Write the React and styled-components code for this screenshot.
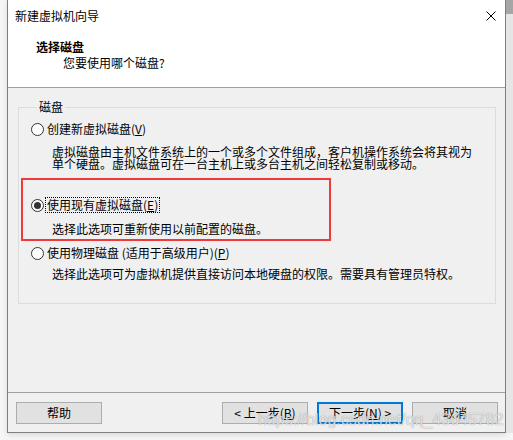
import React from 'react';
import styled, { createGlobalStyle } from 'styled-components';

const GlobalStyle = createGlobalStyle`
  html, body {
    margin: 0;
    padding: 0;
    background: #f6f6f6;
  }
  body {
    font-family: "Noto Sans CJK SC", "Microsoft YaHei", sans-serif;
    font-size: 12px;
    color: #000;
  }
`;

const Page = styled.div`
  position: relative;
  width: 513px;
  height: 440px;
  display: flex;
  align-items: flex-start;
  padding-left: 7px;
  box-sizing: border-box;
  overflow: hidden;
`;

const Window = styled.div`
  width: 499px;
  height: 433px;
  box-sizing: border-box;
  border: 1px solid #7f7f7f;
  border-top: none;
  background: #f0f0f0;
  display: flex;
  flex-direction: column;
  box-shadow: 0 2px 6px rgba(0, 0, 0, 0.12);
`;

const Backdrop = styled.div`
  flex: 1;
  height: 433px;
  display: flex;
  flex-direction: column;
  background: #e6e6e6;
`;

const BackdropTop = styled.div`
  height: 14px;
  background: #a6a6a6;
`;

const Header = styled.div`
  height: 88px;
  box-sizing: border-box;
  background: #fff;
  border-bottom: 1px solid #a0a0a0;
`;

const TitleBar = styled.div`
  height: 32px;
  display: flex;
  align-items: center;
  justify-content: space-between;
  padding: 0 9px 0 7px;
`;

const TitleText = styled.span`
  line-height: 16px;
`;

const Heading = styled.div`
  margin-top: 7px;
  padding-left: 28px;
  line-height: 16px;
  font-weight: 700;
`;

const SubHeading = styled.div`
  padding-left: 55px;
  line-height: 16px;
`;

const Body = styled.div`
  flex: 1;
  padding: 12px 9px 0 10px;
`;

const Group = styled.fieldset`
  margin: 0;
  padding: 0 0 23px 12px;
  border: 1px solid #dcdcdc;
  min-width: 0;
`;

const Legend = styled.legend`
  margin-left: 6px;
  padding: 0 2px;
  line-height: 14px;
`;

const Option = styled.div`
  margin-top: ${({ $gap }) => $gap}px;
`;

const RadioRow = styled.div`
  display: flex;
  align-items: center;
  height: 16px;
`;

const Radio = styled.span`
  width: 13px;
  height: 13px;
  box-sizing: border-box;
  border: 1px solid #333;
  border-radius: 50%;
  background: #fff;
  display: flex;
  align-items: center;
  justify-content: center;
  margin-right: 2px;
  flex-shrink: 0;

  &::after {
    content: '';
    width: 7px;
    height: 7px;
    border-radius: 50%;
    background: ${({ $checked }) => ($checked ? '#333' : 'transparent')};
  }
`;

const Label = styled.span`
  line-height: 14px;
  padding: 0 1px;
  outline: ${({ $focus }) => ($focus ? '1px dotted #000' : 'none')};
`;

const Desc = styled.div`
  margin-top: ${({ $gap }) => $gap}px;
  padding-left: 21px;
  line-height: 12px;
  width: 430px;
`;

const Footer = styled.div`
  height: 40px;
  box-sizing: border-box;
  border-top: 1px solid #a0a0a0;
  padding: 9px 7px 0 8px;
  display: flex;
  align-items: flex-start;
`;

const Spacer = styled.div`
  flex: 1;
`;

const Button = styled.button`
  width: 86px;
  height: 22px;
  box-sizing: border-box;
  margin: 0 0 0 ${({ $gap }) => $gap || 0}px;
  padding: 0;
  border: ${({ $primary }) => ($primary ? '2px solid #0078d7' : '1px solid #adadad')};
  background: #e1e1e1;
  font-family: "Noto Sans CJK SC", sans-serif;
  font-size: 12px;
  line-height: 14px;
  color: #000;
`;

const RedBox = styled.div`
  position: absolute;
  left: 21px;
  top: 178px;
  width: 310px;
  height: 63px;
  box-sizing: border-box;
  border: 2px solid #ee3a3a;
  pointer-events: none;
`;

const Watermark = styled.div`
  position: absolute;
  left: 258px;
  top: 412px;
  font-family: "Liberation Sans", Arial, sans-serif;
  font-size: 16px;
  line-height: 16px;
  color: rgba(255, 255, 255, 0.75);
  text-shadow: 0 0 1px rgba(0, 0, 0, 0.45);
  pointer-events: none;
  white-space: nowrap;
`;

const CloseIcon = () => (
  <svg width="10" height="10" viewBox="0 0 10 10">
    <path d="M0.5 0.5 L9.5 9.5 M9.5 0.5 L0.5 9.5" stroke="#000" strokeWidth="1" fill="none" />
  </svg>
);

const options = [
  {
    label: '创建新虚拟磁盘(',
    key: 'V',
    desc: '虚拟磁盘由主机文件系统上的一个或多个文件组成，客户机操作系统会将其视为单个硬盘。虚拟磁盘可在一台主机上或多台主机之间轻松复制或移动。',
    gap: 7,
    descGap: 9,
  },
  {
    label: '使用现有虚拟磁盘(',
    key: 'E',
    desc: '选择此选项可重新使用以前配置的磁盘。',
    checked: true,
    gap: 27,
    descGap: 10,
  },
  {
    label: '使用物理磁盘 (适用于高级用户)(',
    key: 'P',
    desc: '选择此选项可为虚拟机提供直接访问本地硬盘的权限。需要具有管理员特权。',
    gap: 10,
    descGap: 7,
  },
];

const App = () => {
  return (
    <Page>
      <GlobalStyle />
      <Window>
        <Header>
          <TitleBar>
            <TitleText>新建虚拟机向导</TitleText>
            <CloseIcon />
          </TitleBar>
          <Heading>选择磁盘</Heading>
          <SubHeading>您要使用哪个磁盘?</SubHeading>
        </Header>
        <Body>
          <Group>
            <Legend>磁盘</Legend>
            {options.map((o) => (
              <Option key={o.key} $gap={o.gap}>
                <RadioRow>
                  <Radio $checked={o.checked} />
                  <Label $focus={o.checked}>
                    {o.label}
                    <u>{o.key}</u>)
                  </Label>
                </RadioRow>
                <Desc $gap={o.descGap}>{o.desc}</Desc>
              </Option>
            ))}
          </Group>
        </Body>
        <Footer>
          <Button>帮助</Button>
          <Spacer />
          <Button>
            &lt; 上一步(<u>B</u>)
          </Button>
          <Button $gap={9} $primary>
            下一步(<u>N</u>) &gt;
          </Button>
          <Button $gap={9}>取消</Button>
        </Footer>
      </Window>
      <Backdrop>
        <BackdropTop />
      </Backdrop>
      <RedBox />
      <Watermark>https://blog.csdn.net/qq_43645782</Watermark>
    </Page>
  );
};

export default App;
